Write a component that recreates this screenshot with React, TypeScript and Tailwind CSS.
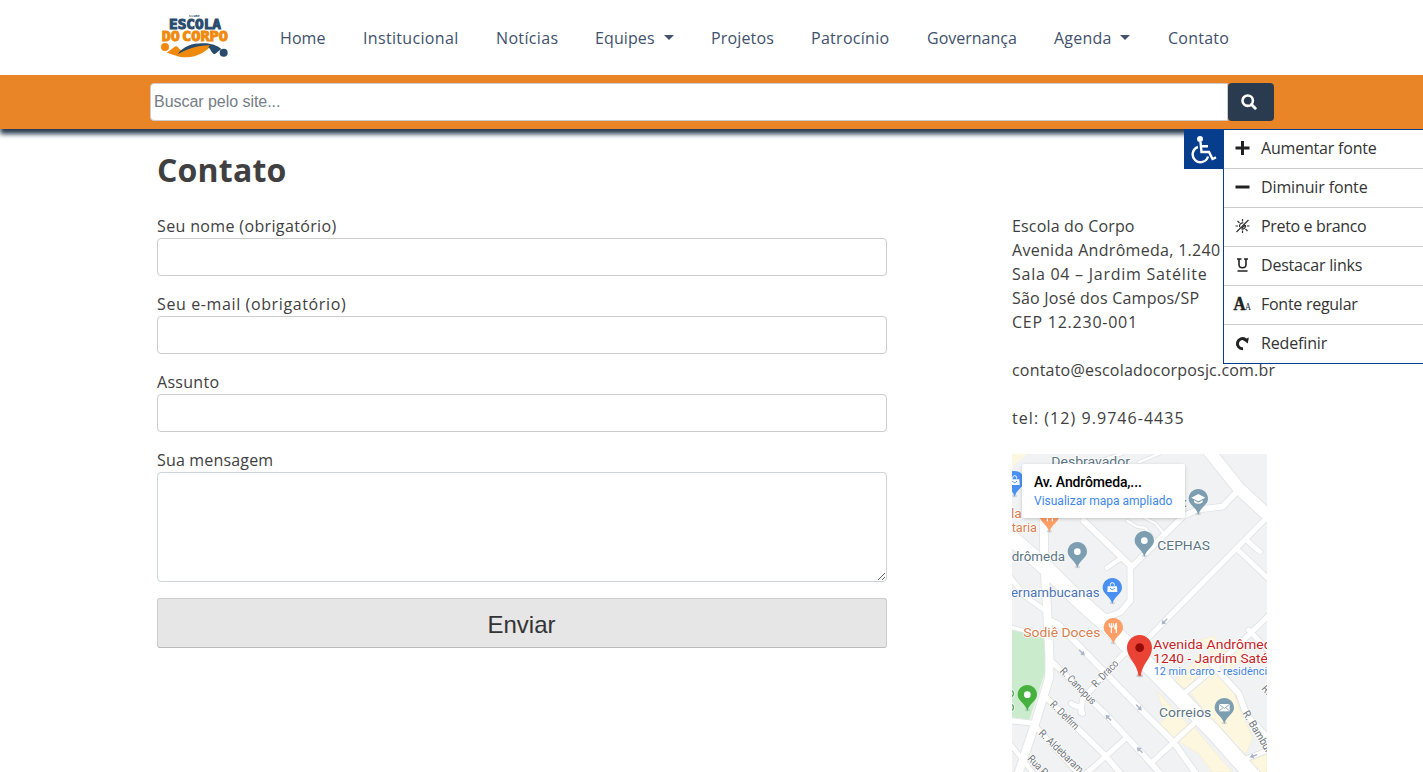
import type { ReactNode } from "react";

const SANS = "font-['Open_Sans','Noto_Sans',sans-serif]";

const navItems = [
  { label: "Home", box: "w-[83px]", track: "tracking-[0.1px]" },
  { label: "Institucional", box: "w-[133px]", track: "tracking-[0.33px]" },
  { label: "Notícias", box: "w-[99px]", track: "tracking-[0.35px]" },
  { label: "Equipes", box: "w-[116px]", track: "tracking-[0.1px]", caret: true },
  { label: "Projetos", box: "w-[100px]", track: "tracking-[0.15px]" },
  { label: "Patrocínio", box: "w-[116px]", track: "tracking-[0.28px]" },
  { label: "Governança", box: "w-[127px]", track: "tracking-normal" },
  { label: "Agenda", box: "w-[114px]", track: "tracking-[0.2px]", caret: true },
  { label: "Contato", box: "w-[70px]", track: "tracking-[0.25px]" },
];

function Logo() {
  return (
    <svg width="70" height="46" viewBox="0 0 210 138" className="shrink-0">
      <g fontFamily="'DejaVu Sans Mono', monospace" fontWeight="700">
        <text x="87" y="7" fontSize="9" fill="#294b6c" textLength="33" lengthAdjust="spacingAndGlyphs">CLUBE</text>
        <text x="27" y="42" fontSize="41" fill="#294b6c" stroke="#294b6c" strokeWidth="3" textLength="156" lengthAdjust="spacingAndGlyphs">ESCOLA</text>
        <g fill="#ef8a0c" stroke="#ef8a0c" strokeWidth="3">
          <text x="5" y="79" fontSize="41" textLength="54" lengthAdjust="spacingAndGlyphs">DO</text>
          <text x="66" y="79" fontSize="41" textLength="138" lengthAdjust="spacingAndGlyphs">CORPO</text>
        </g>
      </g>
      <circle cx="15" cy="96" r="12" fill="#ef8a0c" />
      <circle cx="191" cy="113" r="12" fill="#294b6c" />
      <path d="M20 113L44 95C52 91 55 99 60 104C78 106 92 104 106 100L152 92C144 105 114 127 78 127C55 127 35 117 20 113Z" fill="#ef8a0c" />
      <path d="M53 118C68 94 99 85 126 85C152 84 171 91 184 102L165 117C154 117 155 103 143 95C111 90 85 107 53 118Z" fill="#294b6c" />
      <path d="M150 91C140 103 120 115 92 116C80 117 66 114 53 118C80 103 110 91 150 91Z" fill="#ef8a0c" />
    </svg>
  );
}

function Pin({ x, y, color, children }: { x: number; y: number; color: string; children?: ReactNode }) {
  return (
    <g transform={`translate(${x} ${y})`}>
      <ellipse cx="0" cy="46" rx="8" ry="4" fill="#9aa0a6" opacity=".35" />
      <path d="M0-29C-16-29-29-16-29 0C-29 19-6 24 0 49C6 24 29 19 29 0C29-16 16-29 0-29Z" fill={color} />
      {children ?? <circle r="10" fill="#fff" />}
    </g>
  );
}

function Bag() {
  return (
    <g fill="none" stroke="#fff" strokeWidth="3">
      <path d="M-6-6V-9A6 6 0 0 1 6-9V-6" />
      <path d="M-14-4H14L15 13H-15Z" fill="#fff" stroke="none" />
      <path d="M-7 1Q0 11 7 1" stroke="#4a90f2" />
    </g>
  );
}

function Fork() {
  return (
    <g stroke="#fff" strokeWidth="4" fill="none">
      <path d="M-6-2V16M-12-13V-6Q-12-2-6-2Q0-2 0-6V-13M-6-13V-2" strokeWidth="3.5" />
      <path d="M9 16V-12Q4-10 5 3H9" fill="#fff" />
    </g>
  );
}

const roads = [
  { d: "M-10 245L100 340L200 438L290 518L430 655L610 840L735 980", w: 46 },
  { d: "M95 185L97 330L105 460L112 600V670L72 800L12 980", w: 24 },
  { d: "M-5 370L40 428L98 468", w: 14 },
  { d: "M-5 519L100 548", w: 10 },
  { d: "M115 500L140 512L400 780L485 865L560 970", w: 17 },
  { d: "M590-10L682 105L780 195", w: 36 },
  { d: "M682 105L632 158L560 166L515 185L368 330L355 342L355 440L325 475L285 490", w: 17 },
  { d: "M215 200L355 335", w: 18 },
  { d: "M284 342L322 316", w: 13 },
  { d: "M345 200L375 218L400 222L425 255M395 190L430 208L455 238", w: 7 },
  { d: "M780 175L400 560L335 600L212 735L206 775", w: 15 },
  { d: "M178 748C188 760 195 752 205 762L212 778", w: 15 },
  { d: "M700 255L744 294M675 285L780 385", w: 14 },
  { d: "M122 625L290 790L345 850L460 975", w: 16 },
  { d: "M100 728L280 905L340 975", w: 16 },
  { d: "M-5 800L62 808L210 970", w: 15 },
  { d: "M-5 870L70 965", w: 13 },
  { d: "M210 970L345 850M420 925L542 812", w: 15 },
  { d: "M512 722L610 640L780 475", w: 15 },
  { d: "M600 630L680 718L705 785L780 865", w: 17 },
  { d: "M710 528L780 600M680 922L780 885", w: 14 },
  { d: "M230 30L330 0M380 25L440 0", w: 7 },
];

const streets = [
  { t: "R. Canopus", x: 163, y: 665, r: 46, l: 140 },
  { t: "R. Draco", x: 273, y: 714, r: -46, l: 100 },
  { t: "R. Delfim", x: 133, y: 765, r: 45, l: 108 },
  { t: "R. Aldebaram", x: 99, y: 852, r: 44, l: 172 },
  { t: "Rua Pegasus", x: 66, y: 928, r: 46, l: 160 },
  { t: "R. Bambuí", x: 712, y: 790, r: 59, l: 138 },
  { t: "R. Orion", x: 768, y: 716, r: 50, l: 110 },
];

const arrows = [
  { x: 231, y: 608, r: 45 },
  { x: 402, y: 773, r: 45 },
  { x: 310, y: 803, r: 225 },
  { x: 404, y: 900, r: 225 },
  { x: 478, y: 515, r: 135 },
  { x: 745, y: 918, r: 160 },
];

function MapView() {
  return (
    <div className="relative h-[318px] w-[255px] overflow-hidden bg-[#f1f3f4]">
      <svg width="255" height="318" viewBox="21 12 765 954" className="block">
        <rect x="21" y="12" width="765" height="954" fill="#f0f2f3" />
        <g transform="translate(21 12)">
          <path d="M0 0H45L0 38Z" fill="#fef7e0" />
          <path d="M0 528L95 552L102 645L52 797L0 790Z" fill="#caeccc" />
          <path d="M435 713L528 812L485 853L440 812L462 790ZM500 862L545 820L640 930L660 954H600L562 900ZM532 712L610 645L665 712L685 770L722 850L705 892L680 912L600 800ZM488 680L570 600L605 622L520 705ZM560 560L605 545L645 600L690 560L700 600L650 650ZM690 930L765 900V954H705Z" fill="#fef7e0" stroke="#f7eccb" strokeWidth="2" />
          <g fill="none" strokeLinejoin="round" strokeLinecap="round">
            {roads.map((r) => (
              <path key={r.d} d={r.d} stroke="#e0e3e6" strokeWidth={r.w + 5} />
            ))}
            {roads.map((r) => (
              <path key={r.d} d={r.d} stroke="#fff" strokeWidth={r.w} />
            ))}
          </g>
        </g>
        {arrows.map((a) => (
          <path key={a.x} transform={`translate(${a.x} ${a.y}) rotate(${a.r})`} d="M-12-2H0V-8L12 0L0 8V2H-12Z" fill="#a9b4cc" />
        ))}
        <g fontFamily="Roboto, sans-serif" stroke="#fff" strokeWidth="5" paintOrder="stroke" strokeLinejoin="round">
          <g fontSize="32" fill="#6f757b">
            {streets.map((s) => (
              <text key={s.t} transform={`translate(${s.x} ${s.y}) rotate(${s.r})`} textLength={s.l} lengthAdjust="spacingAndGlyphs">{s.t}</text>
            ))}
          </g>
          <g fontSize="41">
            <g fill="#5c7482">
              <text x="139" y="48" textLength="236" lengthAdjust="spacingAndGlyphs">Desbravador</text>
              <text x="457" y="301" textLength="158" lengthAdjust="spacingAndGlyphs">CEPHAS</text>
              <text x="-28" y="334" textLength="208" lengthAdjust="spacingAndGlyphs">Andrômeda</text>
              <text x="462" y="801" textLength="157" lengthAdjust="spacingAndGlyphs">Correios</text>
              <text x="536" y="172">:</text>
            </g>
            <text x="-7" y="441" fill="#4a73b4" textLength="291" lengthAdjust="spacingAndGlyphs">Pernambucanas</text>
            <g fill="#d97d4e">
              <text x="55" y="562" textLength="231" lengthAdjust="spacingAndGlyphs">Sodiê Doces</text>
              <text x="18" y="205">la</text>
              <text x="20" y="247" textLength="76" lengthAdjust="spacingAndGlyphs">taria</text>
            </g>
            <text x="7" y="742" fill="#3c963d" fontSize="38">o</text>
            <text x="7" y="784" fill="#3c963d" fontSize="38">o</text>
          </g>
        </g>
        <Pin x={29} y={92} color="#4a90f2"><Bag /></Pin>
        <Pin x={133} y={198} color="#ff9e67"><Fork /></Pin>
        <Pin x={580} y={146} color="#7c9eb0"><path d="M-21-3L0-14L21-3L0 8ZM-13 4V11Q0 20 13 11V4L0 12Z" fill="#fff" /></Pin>
        <Pin x={418} y={272} color="#7c9eb0" />
        <Pin x={217} y={305} color="#7c9eb0" />
        <Pin x={322} y={413} color="#4a90f2"><Bag /></Pin>
        <Pin x={325} y={533} color="#ff9e67"><Fork /></Pin>
        <Pin x={67} y={734} color="#46b13f" />
        <Pin x={658} y={773} color="#7c9eb0">
          <rect x="-16" y="-11" width="32" height="22" fill="#fff" />
          <path d="M-16-10L0 2L16-10M-16 10L-4 0M16 10L4 0" fill="none" stroke="#7c9eb0" strokeWidth="2.5" />
        </Pin>
        <ellipse cx="404" cy="677" rx="10" ry="5" fill="#777" opacity=".35" />
        <path d="M404 555C383 555 366 572 366 593C366 625 396 638 401 678H407C412 638 441 625 441 593C441 572 425 555 404 555Z" fill="#ea4335" />
        <circle cx="404" cy="593" r="13" fill="#960a0a" />
        <g fontFamily="Roboto, sans-serif" stroke="#fff" strokeWidth="5" paintOrder="stroke" strokeLinejoin="round">
          <text x="445" y="597" fontSize="41" fill="#c5221f" textLength="386" lengthAdjust="spacingAndGlyphs">Avenida Andrômeda,</text>
          <text x="445" y="639" fontSize="41" fill="#c5221f" textLength="398" lengthAdjust="spacingAndGlyphs">1240 - Jardim Satélite</text>
          <text x="446" y="674" fontSize="32" fill="#3f83e0" textLength="358" lengthAdjust="spacingAndGlyphs">12 min carro - residência</text>
        </g>
      </svg>
      <div className="absolute left-[10px] top-[10px] flex h-[54px] w-[163px] flex-col rounded-[2px] bg-white pl-3 pt-[9px] font-[Roboto,sans-serif] shadow-[0_1px_4px_-1px_rgba(0,0,0,0.3)]">
        <span className="text-[14px] font-medium leading-[18px] tracking-[-0.13px] text-black">Av. Andrômeda,...</span>
        <span className="mt-px text-[12px] leading-[18px] text-[#3d87e8]">Visualizar mapa ampliado</span>
      </div>
    </div>
  );
}

const menu: { label: string; track: string; icon: ReactNode }[] = [
  { label: "Aumentar fonte", track: "tracking-[-0.2px]", icon: <path d="M.5 8H14.5M7.5 1V15" stroke="#222" strokeWidth="3" /> },
  { label: "Diminuir fonte", track: "tracking-[-0.13px]", icon: <path d="M.5 8H14.5" stroke="#222" strokeWidth="3" /> },
  {
    label: "Preto e branco", track: "tracking-[-0.34px]",
    icon: (
      <g stroke="#333" fill="none" strokeWidth="1.2">
        <path d="M7.5 1V3.5M7.5 12.5V15M.5 8H3M12 8H14.5M2.5 3L4.5 5M10.5 11L12.5 13M1.5 14L13.5 2" />
        <path d="M4.6 9A3.2 3.2 0 0 1 8.5 5M10.4 7A3.2 3.2 0 0 1 6.5 11M6.5 10.5L10 7" />
      </g>
    ),
  },
  {
    label: "Destacar links", track: "tracking-[-0.2px]",
    icon: <path d="M2 2H6.5M9 2H13M4 2V7.5Q4 10.8 7.5 10.8Q11 10.8 11 7.5V2M2.5 14H12.5" fill="none" stroke="#222" strokeWidth="1.6" />,
  },
  {
    label: "Fonte regular", track: "tracking-[-0.27px]",
    icon: (
      <g fontFamily="'Liberation Serif', serif" fontWeight="700" fill="#222">
        <text x="-1.5" y="14" fontSize="18" stroke="#222" strokeWidth=".4" textLength="12" lengthAdjust="spacingAndGlyphs">A</text>
        <text x="10" y="14" fontSize="10" fontWeight="400" textLength="6" lengthAdjust="spacingAndGlyphs">A</text>
      </g>
    ),
  },
  {
    label: "Redefinir", track: "tracking-[-0.15px]",
    icon: (
      <g>
        <path d="M8 13.6A5 5 0 1 1 10.5 4.7" fill="none" stroke="#222" strokeWidth="3" />
        <path d="M13.8 2.6L12.8 8.6L8 5Z" fill="#222" />
      </g>
    ),
  },
];

function AccessibilityPanel() {
  return (
    <aside className="absolute right-0 top-[129px] flex items-start">
      <button className="flex h-10 w-[39px] items-center justify-center bg-[#063d8d]">
        <svg width="28" height="30" viewBox="0 0 28 30" fill="none" stroke="#fff" strokeWidth="2.4" className="mr-[2px]">
          <circle cx="11" cy="5" r="3" fill="#fff" stroke="none" />
          <path d="M11.5 8L12.5 18H20L23.5 25L27 23.4M12 12.3H19" />
          <path d="M9 13A7.8 7.8 0 1 0 19 22.5" />
        </svg>
      </button>
      <ul className="w-[200px] border-b border-l border-t border-[#063d8d] bg-white">
        {menu.map((m) => (
          <li key={m.label} className="flex h-[39px] items-center border-b border-[#ccc] pb-px pl-[11px] last:h-[38px] last:border-b-0">
            <svg width="16" height="17" viewBox="0 0 16 17" className="mr-[10px] shrink-0 overflow-visible">{m.icon}</svg>
            <span className={`whitespace-nowrap pb-px text-[16px] leading-6 text-[#333] ${m.track}`}>{m.label}</span>
          </li>
        ))}
      </ul>
    </aside>
  );
}

const fields = [
  { label: "Seu nome (obrigatório)", track: "tracking-[0.36px]" },
  { label: "Seu e-mail (obrigatório)", track: "tracking-[0.62px]" },
  { label: "Assunto", track: "tracking-[0.28px]" },
];

const address = [
  { line: "Escola do Corpo", track: "tracking-[0.17px]" },
  { line: "Avenida Andrômeda, 1.240", track: "tracking-[0.3px]" },
  { line: "Sala 04 – Jardim Satélite", track: "tracking-[0.74px]" },
  { line: "São José dos Campos/SP", track: "tracking-[0.22px]" },
  { line: "CEP 12.230-001", track: "tracking-[0.76px]" },
];

export default function App() {
  return (
    <div className={`relative h-[772px] w-full overflow-hidden bg-white text-[16px] leading-6 text-[#404040] ${SANS}`}>
      <header className="flex h-[75px] items-center pl-[160px]">
        <Logo />
        <nav className="ml-[50px] flex pt-px">
          {navItems.map((n) => (
            <a key={n.label} className={`flex shrink-0 items-center whitespace-nowrap text-[#41516d] ${n.box} ${n.track}`}>
              {n.label}
              {n.caret && <span className="-mt-0.5 ml-[9px] border-x-[5px] border-t-[5px] border-x-transparent border-t-[#41516d]" />}
            </a>
          ))}
        </nav>
      </header>

      <div className="relative flex h-[54px] bg-[#e98427] pl-[150px] pt-2 shadow-[0_5px_5px_#25384d]">
        <input
          placeholder="Buscar pelo site..."
          className="h-[38px] w-[1078px] rounded-l-[4px] border border-[#ccc] bg-white px-[3px] pb-px font-['Liberation_Sans',sans-serif] text-[16px] tracking-[-0.04px] placeholder:text-[#757d85]"
        />
        <button className="flex h-[38px] w-[46px] items-center justify-center rounded-[4px] bg-[#2a3b50] pr-1">
          <svg width="16" height="16" viewBox="0 0 16 16" fill="none" stroke="#fff">
            <circle cx="6.7" cy="6.7" r="5.2" strokeWidth="2.6" />
            <path d="M10.5 10.5L14.2 14.2" strokeWidth="3" strokeLinecap="round" />
          </svg>
        </button>
      </div>

      <main className="flex pl-[157px]">
        <section className="w-[730px]">
          <h1 className="mt-[22px] text-[32px] font-bold leading-[38px] tracking-[0.2px]">Contato</h1>
          <form className="mt-[25px]">
            {fields.map((f) => (
              <label key={f.label} className="mb-4 block">
                <span className={`block whitespace-nowrap ${f.track}`}>{f.label}</span>
                <input className="block h-[38px] w-full rounded-[4px] border border-[#ccc]" />
              </label>
            ))}
            <label className="block">
              <span className="block tracking-[0.17px]">Sua mensagem</span>
              <textarea className="block h-[110px] w-full resize rounded-[4px] border border-[#ced4da]" />
            </label>
            <button className="mt-4 h-[50px] w-full rounded-[3px] border border-[#ccc] border-b-[#bbb] bg-[#e6e6e6] pr-px pt-[3px] font-['Liberation_Sans',sans-serif] text-[24px] text-[#333]">
              Enviar
            </button>
          </form>
        </section>
        <section className="ml-[125px] pt-[85px]">
          {address.map((a) => (
            <p key={a.line} className={`whitespace-nowrap ${a.track}`}>{a.line}</p>
          ))}
          <p className="mt-6 whitespace-nowrap tracking-[0.2px]">contato@escoladocorposjc.com.br</p>
          <p className="mb-6 mt-6 tracking-[1.05px]">tel: (12) 9.9746-4435</p>
          <MapView />
        </section>
      </main>
      <AccessibilityPanel />
    </div>
  );
}
